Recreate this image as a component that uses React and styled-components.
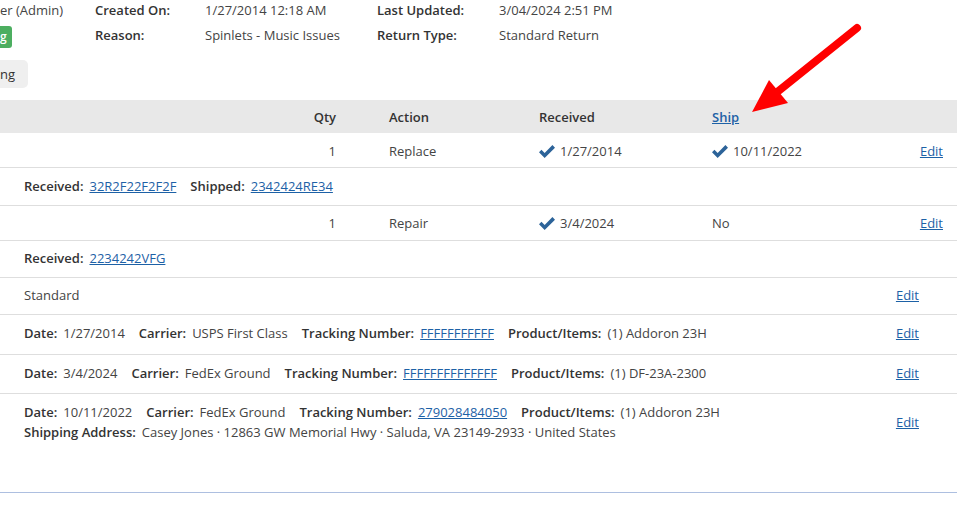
import React from 'react';
import styled, { createGlobalStyle } from 'styled-components';

const GlobalStyle = createGlobalStyle`
  html, body {
    margin: 0;
    padding: 0;
    background: #fff;
  }
  body {
    font-family: "Open Sans", "Liberation Sans", sans-serif;
    font-size: 13px;
    color: #333;
    overflow: hidden;
  }
  *, *::before, *::after {
    box-sizing: border-box;
  }
`;

const Page = styled.div`
  position: relative;
  width: 957px;
  min-height: 506px;
`;

const Header = styled.div`
  display: flex;
  height: 100px;
`;

const Owner = styled.div`
  width: 95px;
  display: flex;
  flex-direction: column;
  align-items: flex-start;
`;

const OwnerName = styled.div`
  line-height: 20px;
  color: #444;
`;

const StatusBadge = styled.span`
  margin: 6px 0 0 -6px;
  height: 22px;
  line-height: 22px;
  padding: 0 5px 0 6px;
  background: #4cae60;
  color: #fff;
  font-size: 12px;
  font-weight: 600;
  border-radius: 3px;
`;

const GreyButton = styled.span`
  margin: 12px 0 0 -6px;
  height: 28px;
  line-height: 28px;
  padding: 0 13px 0 6px;
  background: #efefef;
  border-radius: 5px;
  color: #333;
`;

const MetaGrid = styled.div`
  display: grid;
  grid-template-columns: 110px 172px 122px auto;
  grid-auto-rows: 20px;
  row-gap: 5px;
  line-height: 20px;
  align-content: start;
`;

const Label = styled.span`
  font-weight: 600;
  color: #333;
`;

const Value = styled.span`
  color: #444;
`;

const Link = styled.a`
  color: #1d61a6;
  text-decoration: underline;
  cursor: pointer;
`;

const columns = '389px 150px 173px 1fr auto';

const HeadRow = styled.div`
  display: grid;
  grid-template-columns: ${columns};
  align-items: center;
  height: 33px;
  padding-right: 14px;
  background: #e8e8e8;
  font-weight: 600;
  color: #333;
`;

const ItemRow = styled.div`
  display: grid;
  grid-template-columns: ${columns};
  align-items: center;
  height: 35px;
  padding: ${p => p.$pt}px 14px 0 0;
  border-bottom: 1px solid #dedede;
  color: #444;
`;

const QtyCell = styled.div`
  text-align: right;
  padding-right: 53px;
`;

const Cell = styled.div`
  display: flex;
  align-items: center;
  gap: 4px;
`;

const DetailRow = styled.div`
  display: flex;
  align-items: center;
  gap: 14px;
  height: ${p => p.$h}px;
  padding: 0 24px 2px;
  border-bottom: 1px solid #dedede;
`;

const Field = styled.span`
  display: inline-flex;
  gap: 6px;
  white-space: nowrap;
`;

const InfoRow = styled.div`
  display: flex;
  align-items: center;
  justify-content: space-between;
  padding: ${p => p.$pt}px 38px ${p => p.$pb}px 24px;
  line-height: ${p => p.$lh || 18}px;
  border-bottom: ${p => (p.$last ? 'none' : '1px solid #dedede')};
`;

const InfoLines = styled.div`
  display: flex;
  flex-direction: column;
`;

const InfoLine = styled.div`
  display: flex;
  gap: 14px;
`;

const FooterRule = styled.div`
  margin-top: 42px;
  border-top: 1px solid #adbfe0;
`;

const Arrow = styled.svg`
  position: absolute;
  left: 740px;
  top: 15px;
  pointer-events: none;
`;

function Check() {
  return (
    <svg width="16" height="13" viewBox="0 0 15 12" style={{ marginRight: 1 }}>
      <path d="M0 6.6 L2.3 4.4 L5.3 7.4 L12.6 0 L15 2.4 L5.3 12 Z" fill="#2c6399" />
    </svg>
  );
}

function F({ label, children }) {
  return (
    <Field>
      <Label>{label}</Label>
      <Value>{children}</Value>
    </Field>
  );
}

export default function App() {
  return (
    <Page>
      <GlobalStyle />
      <Header>
        <Owner>
          <OwnerName>er (Admin)</OwnerName>
          <StatusBadge>g</StatusBadge>
          <GreyButton>ng</GreyButton>
        </Owner>
        <MetaGrid>
          <Label>Created On:</Label>
          <Value>1/27/2014 12:18 AM</Value>
          <Label>Last Updated:</Label>
          <Value>3/04/2024 2:51 PM</Value>
          <Label>Reason:</Label>
          <Value>Spinlets - Music Issues</Value>
          <Label>Return Type:</Label>
          <Value>Standard Return</Value>
        </MetaGrid>
      </Header>

      <HeadRow>
        <QtyCell>Qty</QtyCell>
        <Cell>Action</Cell>
        <Cell>Received</Cell>
        <Cell><Link>Ship</Link></Cell>
        <Cell />
      </HeadRow>
      <ItemRow $pt={2}>
        <QtyCell>1</QtyCell>
        <Cell>Replace</Cell>
        <Cell><Check /> 1/27/2014</Cell>
        <Cell><Check /> 10/11/2022</Cell>
        <Cell><Link>Edit</Link></Cell>
      </ItemRow>
      <DetailRow $h={38}>
        <F label="Received:"><Link>32R2F22F2F2F</Link></F>
        <F label="Shipped:"><Link>2342424RE34</Link></F>
      </DetailRow>
      <ItemRow $pt={0}>
        <QtyCell>1</QtyCell>
        <Cell>Repair</Cell>
        <Cell><Check /> 3/4/2024</Cell>
        <Cell>No</Cell>
        <Cell><Link>Edit</Link></Cell>
      </ItemRow>
      <DetailRow $h={37}>
        <F label="Received:"><Link>2234242VFG</Link></F>
      </DetailRow>

      <InfoRow $pt={8} $pb={10}>
        <Value>Standard</Value>
        <Link>Edit</Link>
      </InfoRow>
      <InfoRow $pt={9} $pb={12}>
        <InfoLine>
          <F label="Date:">1/27/2014</F>
          <F label="Carrier:">USPS First Class</F>
          <F label="Tracking Number:"><Link>FFFFFFFFFFF</Link></F>
          <F label="Product/Items:">(1) Addoron 23H</F>
        </InfoLine>
        <Link>Edit</Link>
      </InfoRow>
      <InfoRow $pt={9} $pb={11}>
        <InfoLine>
          <F label="Date:">3/4/2024</F>
          <F label="Carrier:">FedEx Ground</F>
          <F label="Tracking Number:"><Link>FFFFFFFFFFFFFF</Link></F>
          <F label="Product/Items:">(1) DF-23A-2300</F>
        </InfoLine>
        <Link>Edit</Link>
      </InfoRow>
      <InfoRow $pt={8} $pb={8} $lh={20} $last>
        <InfoLines>
          <InfoLine>
            <F label="Date:">10/11/2022</F>
            <F label="Carrier:">FedEx Ground</F>
            <F label="Tracking Number:"><Link>279028484050</Link></F>
            <F label="Product/Items:">(1) Addoron 23H</F>
          </InfoLine>
          <InfoLine>
            <F label="Shipping Address:">
              Casey Jones · 12863 GW Memorial Hwy · Saluda, VA 23149-2933 · United States
            </F>
          </InfoLine>
        </InfoLines>
        <Link>Edit</Link>
      </InfoRow>
      <FooterRule />

      <Arrow width="130" height="105" viewBox="0 0 130 105">
        <line x1="117" y1="13" x2="36" y2="78" stroke="#ff0000" strokeWidth="8" strokeLinecap="round" />
        <polygon points="12,97 29,65 48,88" fill="#ff0000" />
      </Arrow>
    </Page>
  );
}
